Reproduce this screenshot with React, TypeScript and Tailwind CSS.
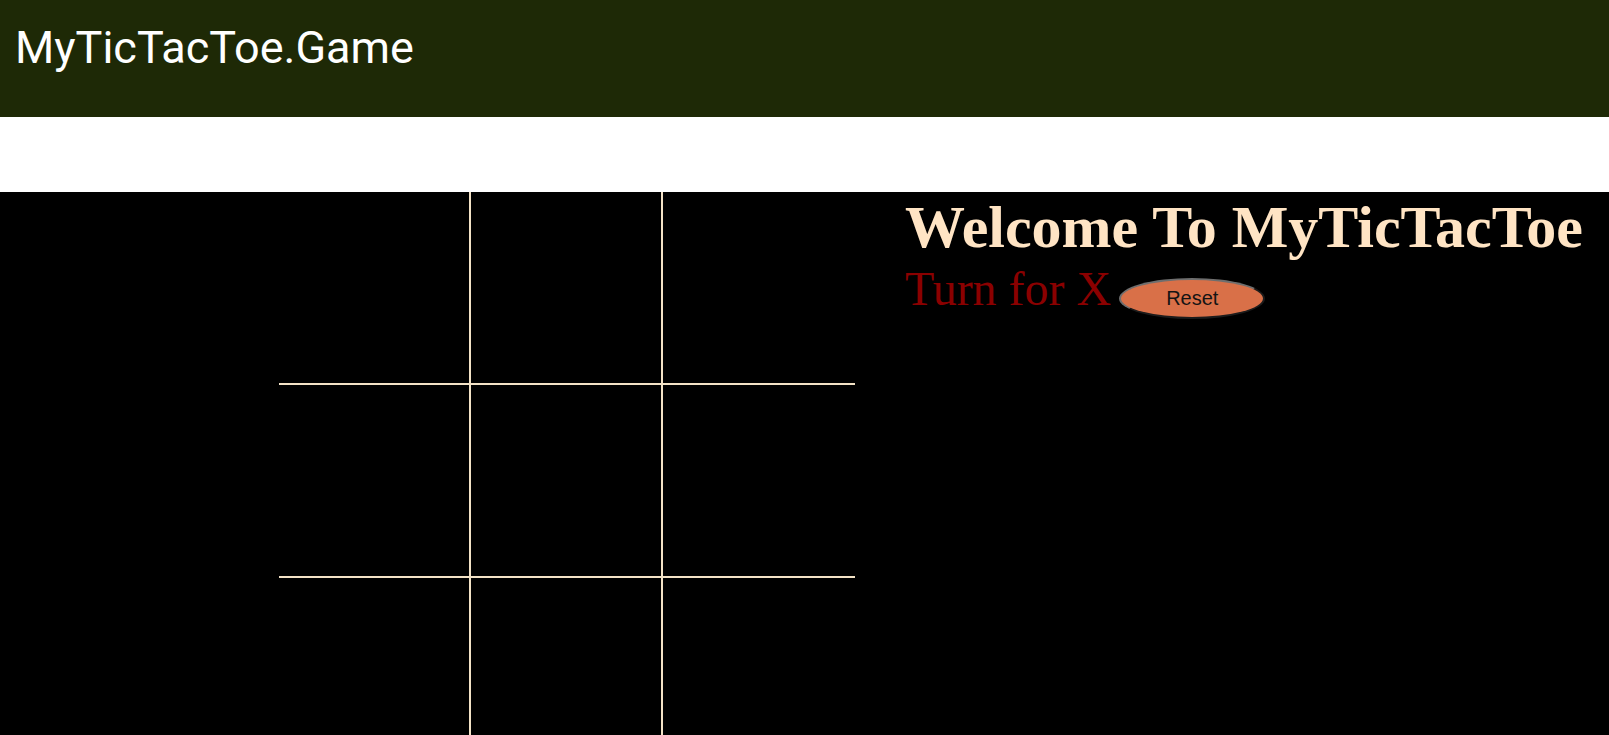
import { useState } from "react";

const lineColor = "border-[#f3e2c6]";

export default function App() {
  const [cells, setCells] = useState<string[]>(Array(9).fill(""));
  const [turn, setTurn] = useState("X");

  const play = (i: number) => {
    if (cells[i]) return;
    const next = [...cells];
    next[i] = turn;
    setCells(next);
    setTurn(turn === "X" ? "O" : "X");
  };

  const reset = () => {
    setCells(Array(9).fill(""));
    setTurn("X");
  };

  return (
    <div className="h-screen flex flex-col overflow-hidden bg-white">
      <header className="h-[117px] shrink-0 bg-[#1e2906] px-[15px] pt-[25px]">
        <h1 className="font-['Roboto',sans-serif] text-[45px] leading-[45px] text-white">
          MyTicTacToe.Game
        </h1>
      </header>

      <div className="h-[75px] shrink-0" />

      <main className="flex-1 flex bg-black pl-[279px]">
        <div className="grid grid-cols-[192px_192px_192px] grid-rows-[193px_193px_193px] self-start">
          {cells.map((v, i) => (
            <button
              key={i}
              onClick={() => play(i)}
              className={`
              ${lineColor}
              ${i % 3 < 2 ? "border-r-2" : ""}
              ${i < 6 ? "border-b-2" : ""}
              flex items-center justify-center
              font-['Liberation_Serif',serif]
              text-[96px]
              text-[#ffe4c4]
              `}
            >
              {v}
            </button>
          ))}
        </div>

        <div className="ml-[50px] pt-[5px] font-['Liberation_Serif',serif]">
          <h2 className="text-[60px] leading-none font-bold text-[#ffe4c4] whitespace-nowrap">
            Welcome To MyTicTacToe
          </h2>
          <div className="flex items-baseline gap-[8px] mt-[8px]">
            <span className="text-[48px] leading-none text-[#8b0000]">
              Turn for {turn}
            </span>
            <button
              onClick={reset}
              className="
              w-[146px]
              h-[41px]
              rounded-[50%]
              bg-[#d97048]
              border-2
              border-t-[#6e6e6e]
              border-l-[#6e6e6e]
              border-r-[#1c1c1c]
              border-b-[#1c1c1c]
              font-['Liberation_Sans',sans-serif]
              text-[20px]
              text-[#141414]
              "
            >
              Reset
            </button>
          </div>
        </div>
      </main>
    </div>
  );
}
